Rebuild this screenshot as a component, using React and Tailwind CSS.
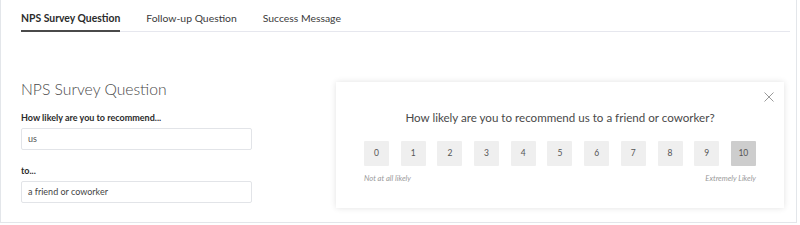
import React from "react";

const scores = [0, 1, 2, 3, 4, 5, 6, 7, 8, 9, 10];

const tabs = ["NPS Survey Question", "Follow-up Question", "Success Message"];

export default function App() {
  return (
    <div
      className="w-[797px] h-[223px] bg-white border-l border-r border-b border-[#e3e6ea] pl-[20px] pr-[6px] overflow-hidden"
      style={{ fontFamily: "Lato, 'Open Sans', sans-serif" }}>
      {/* Tabs */}
      <div className="flex gap-[26px] border-b border-[#e6e7ee] pt-[11px]">
        {tabs.map((t, i) => (
          <div
            key={t}
            className={`pb-[5px] text-[10.4px] leading-[14px] -mb-px ${
              i === 0
                ? "font-bold text-[#2b2b2b] border-b-2 border-[#4a4a4a]"
                : "text-[#3a3a3a] border-b-2 border-transparent"
            }`}>
            {t}
          </div>
        ))}
      </div>

      <div className="flex items-start mt-[50px]">
        {/* Left form */}
        <div className="w-[231px] -mt-[2px]">
          <div className="text-[15.7px] leading-[18px] text-[#4a4a4a] font-light">
            NPS Survey Question
          </div>
          <div className="mt-[14px] text-[9px] leading-[12px] font-bold text-[#2b2b2b]">
            How likely are you to recommend...
          </div>
          <div className="mt-[4px] h-[22px] border border-[#e2e4e8] rounded-[2px] px-[6px] flex items-center text-[9px] text-[#555]">
            us
          </div>
          <div className="mt-[15px] text-[9px] leading-[12px] font-bold text-[#2b2b2b]">
            to...
          </div>
          <div className="mt-[4px] h-[22px] border border-[#e2e4e8] rounded-[2px] px-[6px] flex items-center text-[9px] text-[#444]">
            a friend or coworker
          </div>
        </div>

        {/* Preview card */}
        <div className="ml-[84px] w-[448px] h-[126px] bg-white shadow-[0_0_6px_rgba(0,0,0,0.12)] relative pt-[28px]">
          <svg
            className="absolute right-[10px] top-[10px]"
            width="10"
            height="10"
            viewBox="0 0 10 10">
            <path d="M0.5 0.5 L9.5 9.5 M9.5 0.5 L0.5 9.5" stroke="#9a9a9a" strokeWidth="1" />
          </svg>
          <div className="text-center text-[11.6px] leading-[16px] text-[#4a4a4a]">
            How likely are you to recommend us to a friend or coworker?
          </div>
          <div className="mx-[28px] mt-[15px] flex justify-between">
            {scores.map((s) => (
              <div
                key={s}
                className={`w-[25px] h-[25px] flex items-center justify-center text-[8.5px] text-[#555] rounded-[1px] ${
                  s === 10 ? "bg-[#cdcdcd]" : "bg-[#efefef]"
                }`}>
                {s}
              </div>
            ))}
          </div>
          <div className="mx-[28px] mt-[7px] flex justify-between text-[7.6px] italic text-[#9a9a9a]">
            <span>Not at all likely</span>
            <span>Extremely Likely</span>
          </div>
        </div>
      </div>
    </div>
  );
}
